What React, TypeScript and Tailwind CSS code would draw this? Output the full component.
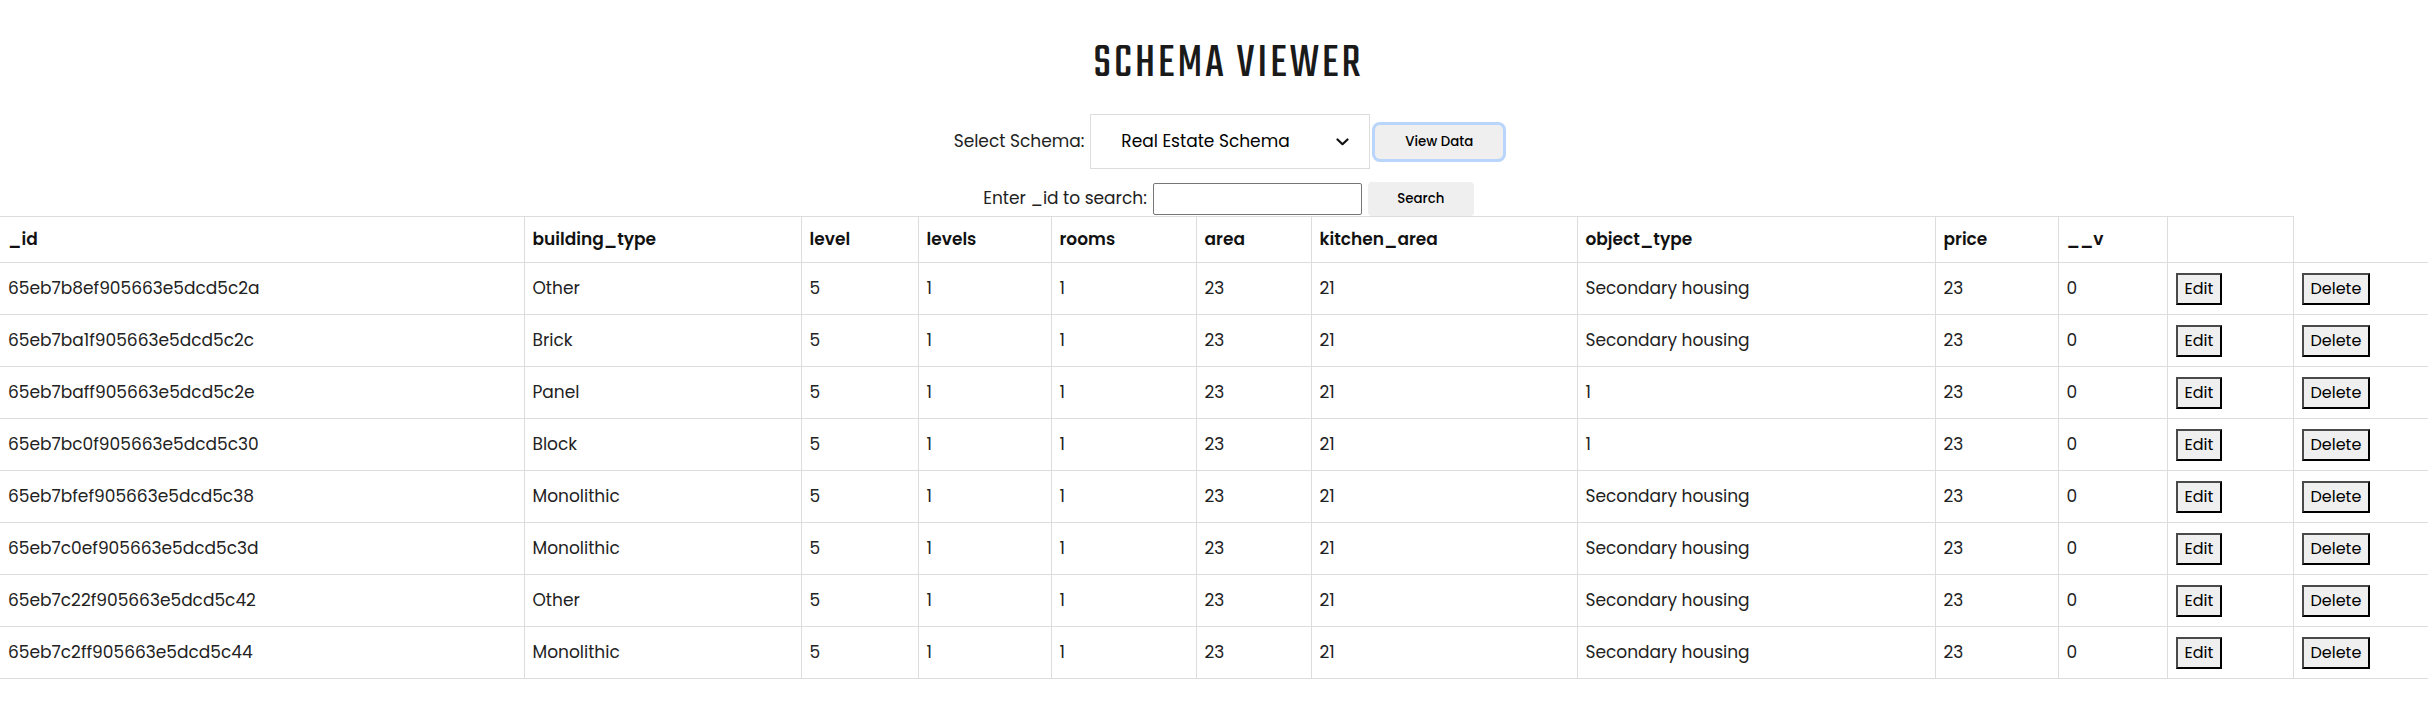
import React from "react";

const rows = [
  { _id: "65eb7b8ef905663e5dcd5c2a", building_type: "Other", object_type: "Secondary housing" },
  { _id: "65eb7ba1f905663e5dcd5c2c", building_type: "Brick", object_type: "Secondary housing" },
  { _id: "65eb7baff905663e5dcd5c2e", building_type: "Panel", object_type: "1" },
  { _id: "65eb7bc0f905663e5dcd5c30", building_type: "Block", object_type: "1" },
  { _id: "65eb7bfef905663e5dcd5c38", building_type: "Monolithic", object_type: "Secondary housing" },
  { _id: "65eb7c0ef905663e5dcd5c3d", building_type: "Monolithic", object_type: "Secondary housing" },
  { _id: "65eb7c22f905663e5dcd5c42", building_type: "Other", object_type: "Secondary housing" },
  { _id: "65eb7c2ff905663e5dcd5c44", building_type: "Monolithic", object_type: "Secondary housing" },
];

const columns = ["_id", "building_type", "level", "levels", "rooms", "area", "kitchen_area", "object_type", "price", "__v"];
const widths = [524, 277, 117, 133, 145, 115, 266, 358, 123, 109, 126, 164];

const ActionButton = ({ label }: { label: string }) => (
  <button className="h-8 px-[7px] bg-[#efefef] border-2 border-[#4a4a4a] border-r-black border-b-black text-[16px] text-black leading-none">
    {label}
  </button>
);

export default function App() {
  return (
    <div className="w-full overflow-hidden bg-white" style={{ fontFamily: '"Poppins", "Open Sans", sans-serif' }}>
      <div className="w-[2457px] text-[#222]">
        <h1
          className="mt-[41px] h-[43px] text-center text-[48px] leading-none font-normal tracking-[3px] text-[#1a1a1a]"
          style={{ fontFamily: '"Teko", "Liberation Sans Narrow", "DejaVu Sans Condensed", sans-serif' }}
        >
          SCHEMA VIEWER
        </h1>

        <div className="mt-[30px] flex items-center justify-center">
          <span className="text-[17px] mr-[6px]">Select Schema:</span>
          <div className="w-[280px] h-[55px] border border-[#dddddd] flex items-center justify-between pl-[30px] pr-[20px] text-[17px] text-black">
            <span>Real Estate Schema</span>
            <svg width="13" height="8" viewBox="0 0 13 8" fill="none">
              <path d="M1.5 1.5 L6.5 6.2 L11.5 1.5" stroke="#111" strokeWidth="2.2" strokeLinecap="round" strokeLinejoin="round" />
            </svg>
          </div>
          <button className="ml-[5px] w-[128px] h-[34px] rounded-[5px] bg-[#efefef] ring-[3px] ring-[#b9d5fb] text-[13.33px] font-medium text-black">
            View Data
          </button>
        </div>

        <div className="mt-[13px] flex items-center justify-center">
          <span className="text-[17px] mr-[6px]">Enter _id to search:</span>
          <input className="w-[209px] h-[32px] border border-[#767676] rounded-[2px] bg-white" />
          <button className="ml-[6px] w-[106px] h-[34px] rounded-[4px] bg-[#efefef] text-[13.33px] font-medium text-black">
            Search
          </button>
        </div>

        <table className="table-fixed border-collapse w-[2457px] text-left">
          <colgroup>
            {widths.map((w, i) => (
              <col key={i} style={{ width: w }} />
            ))}
          </colgroup>
          <thead>
            <tr className="h-[46px]">
              {columns.map((c, i) => (
                <th
                  key={c}
                  className={`border border-[#dddddd] px-2 text-[17px] font-semibold text-[#111] ${i === 0 ? "border-l-0" : ""}`}
                >
                  {c}
                </th>
              ))}
              <th className="border border-[#dddddd] px-2"></th>
            </tr>
          </thead>
          <tbody>
            {rows.map((r) => {
              const cells = [r._id, r.building_type, "5", "1", "1", "23", "21", r.object_type, "23", "0"];
              return (
                <tr key={r._id} className="h-[52px]">
                  {cells.map((v, i) => (
                    <td
                      key={i}
                      className={`border border-[#dddddd] px-2 text-[17px] ${i === 0 ? "border-l-0" : ""}`}
                    >
                      {v}
                    </td>
                  ))}
                  <td className="border border-[#dddddd] px-2">
                    <ActionButton label="Edit" />
                  </td>
                  <td className="border border-[#dddddd] px-2">
                    <ActionButton label="Delete" />
                  </td>
                </tr>
              );
            })}
          </tbody>
        </table>
      </div>
    </div>
  );
}
